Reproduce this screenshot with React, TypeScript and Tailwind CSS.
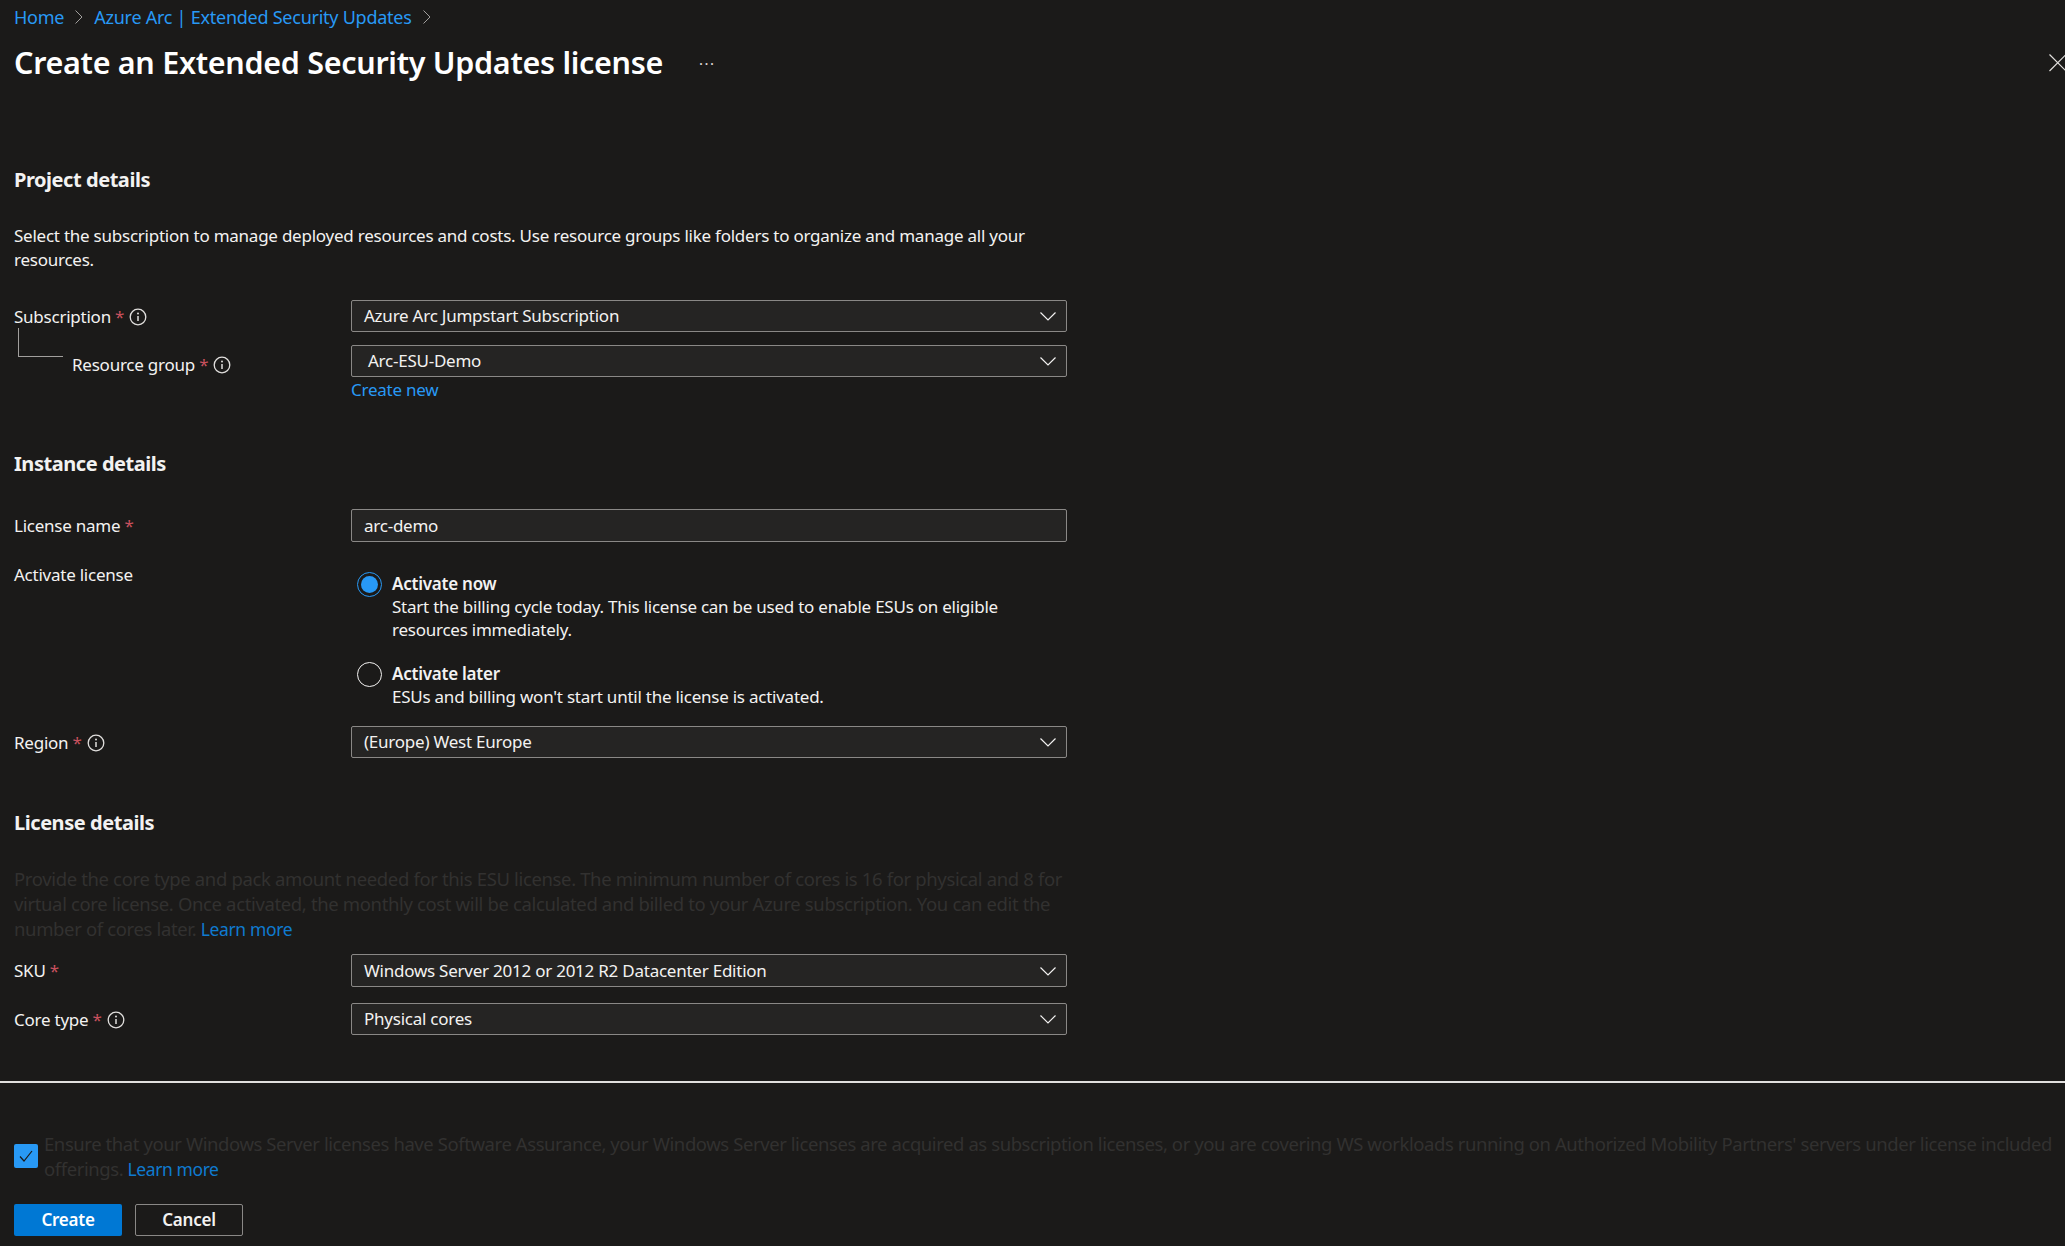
import { type ReactNode } from 'react'

const LINK = 'text-[#2899f5]'
const LEARN = 'text-[#0f7bd0] text-[17.5px]'
const DIM = 'text-[#323130]'

function Chevron() {
  return (
    <svg width="16" height="16" viewBox="0 0 16 16" fill="none" stroke="#f3f2f1" strokeWidth="1.2" className="shrink-0">
      <path d="M0.5 4.5 L8 12 L15.5 4.5" />
    </svg>
  )
}

function Info() {
  return (
    <svg width="18" height="18" viewBox="0 0 18 18" fill="none" className="shrink-0">
      <circle cx="9" cy="9" r="7.8" stroke="#e1dfdd" strokeWidth="1.3" />
      <circle cx="9" cy="5.4" r="1" fill="#e1dfdd" />
      <path d="M9 8 V13" stroke="#e1dfdd" strokeWidth="1.5" />
    </svg>
  )
}

function Req() {
  return <span className="text-[#c8515e]">*</span>
}

function Select({ value, pad = 'pl-[12px]', input }: { value: string; pad?: string; input?: boolean }) {
  return (
    <div className={`flex h-full w-[716px] items-center justify-between rounded-[2px] border border-[#8a8886] bg-[#252423] pr-[10px] ${pad}`}>
      <span className="text-[#f3f2f1]">{value}</span>
      {!input && <Chevron />}
    </div>
  )
}

function Row({ label, children, h, mt, labelPad = '' }: { label: ReactNode; children: ReactNode; h: string; mt: string; labelPad?: string }) {
  return (
    <div className={`flex ${h} ${mt}`}>
      <div className={`flex w-[337px] shrink-0 items-center gap-[5px] text-[#f3f2f1] ${labelPad}`}>{label}</div>
      {children}
    </div>
  )
}

function Heading({ children, mt }: { children: ReactNode; mt: string }) {
  return <h2 className={`flex h-[30px] items-center text-[20px] font-bold tracking-[-0.45px] text-[#f3f2f1] ${mt}`}>{children}</h2>
}

function Radio({ on, title, lines, mt }: { on?: boolean; title: string; lines: string[]; mt: string }) {
  return (
    <div className={`flex ${mt}`}>
      <div className={`ml-[6px] flex h-[25px] w-[25px] shrink-0 items-center justify-center rounded-full border ${on ? 'border-[#2899f5]' : 'border-[#f3f2f1]'}`}>
        {on && <div className="h-[17px] w-[17px] rounded-full bg-[#2899f5]" />}
      </div>
      <div className="ml-[10px] text-[#f3f2f1] leading-[23px]">
        <div className="font-semibold">{title}</div>
        {lines.map(l => <div key={l}>{l}</div>)}
      </div>
    </div>
  )
}

export default function App() {
  return (
    <div className="h-[1246px] w-[2065px] overflow-hidden bg-[#1b1a19] font-['Noto_Sans',sans-serif] text-[17px] tracking-[-0.24px]">
      <div className="relative pl-[14px]">
        <div className={`flex h-[34px] items-center gap-[10px] text-[18px] tracking-[-0.25px] ${LINK}`}>
          <span>Home</span>
          <svg width="10" height="16" viewBox="0 0 10 16" fill="none" stroke="#a19f9d" strokeWidth="1"><path d="M1.5 1.5 L8 8 L1.5 14.5" /></svg>
          <span>Azure Arc | Extended Security Updates</span>
          <svg width="10" height="16" viewBox="0 0 10 16" fill="none" stroke="#a19f9d" strokeWidth="1"><path d="M1.5 1.5 L8 8 L1.5 14.5" /></svg>
        </div>
        <div className="mt-[9px] flex h-[40px] items-center">
          <h1 className="text-[30.5px] font-semibold tracking-[-0.3px] text-white">Create an Extended Security Updates license</h1>
          <span className="ml-[36px] text-[15px] tracking-[1.5px] text-[#e1dfdd]">···</span>
        </div>
        <svg width="18" height="18" viewBox="0 0 18 18" fill="none" stroke="#e1dfdd" strokeWidth="1.2" className="absolute top-[54px] left-[2049px]">
          <path d="M0.5 0.5 L17 17 M17 0.5 L0.5 17" />
        </svg>

        <Heading mt="mt-[82px]">Project details</Heading>
        <p className="mt-[29px] w-[1040px] leading-[23.5px] text-[#f3f2f1]">
          Select the subscription to manage deployed resources and costs. Use resource groups like folders to organize and manage all your resources.
        </p>

        <div className="relative">
          <div className="absolute top-[28px] left-[4px] h-[29px] w-[45px] border-b border-l border-[#a19f9d]" />
          <Row h="h-[32px]" mt="mt-[29px]" labelPad="pt-[2px]" label={<><span>Subscription <Req /></span><Info /></>}>
            <Select value="Azure Arc Jumpstart Subscription" />
          </Row>
          <Row h="h-[32px]" mt="mt-[13px]" labelPad="pl-[58px] pt-[8px]" label={<><span>Resource group <Req /></span><Info /></>}>
            <Select value="Arc-ESU-Demo" pad="pl-[16px]" />
          </Row>
        </div>
        <div className={`ml-[337px] mt-[1px] flex h-[24px] items-center ${LINK}`}>Create new</div>

        <Heading mt="mt-[47px]">Instance details</Heading>
        <Row h="h-[33px]" mt="mt-[30px]" label={<span>License name <Req /></span>}>
          <Select value="arc-demo" input />
        </Row>
        <div className="mt-[21px] flex">
          <div className="w-[337px] shrink-0 leading-[23px] text-[#f3f2f1]">Activate license</div>
          <div className="pt-[9px]">
            <Radio on mt="" title="Activate now" lines={['Start the billing cycle today. This license can be used to enable ESUs on eligible', 'resources immediately.']} />
            <Radio mt="mt-[21px]" title="Activate later" lines={["ESUs and billing won't start until the license is activated."]} />
          </div>
        </div>
        <Row h="h-[32px]" mt="mt-[18px]" labelPad="pt-[2px]" label={<><span>Region <Req /></span><Info /></>}>
          <Select value="(Europe) West Europe" />
        </Row>

        <Heading mt="mt-[50px]">License details</Heading>
        <p className={`mt-[28px] w-[1060px] text-[18.5px] leading-[25px] tracking-[-0.36px] ${DIM}`}>
          Provide the core type and pack amount needed for this ESU license. The minimum number of cores is 16 for physical and 8 for virtual core license. Once activated, the monthly cost will be calculated and billed to your Azure subscription. You can edit the number of cores later. <span className={LEARN}>Learn more</span>
        </p>
        <Row h="h-[33px]" mt="mt-[12px]" label={<span>SKU <Req /></span>}>
          <Select value="Windows Server 2012 or 2012 R2 Datacenter Edition" />
        </Row>
        <Row h="h-[32px]" mt="mt-[16px]" labelPad="pt-[2px]" label={<><span>Core type <Req /></span><Info /></>}>
          <Select value="Physical cores" />
        </Row>
      </div>

      <div className="mt-[46px] h-[2px] w-full bg-[#e1dfdd]" />

      <div className="pl-[14px]">
        <div className="mt-[48px] flex">
          <div className="mt-[13px] flex h-[24px] w-[24px] shrink-0 items-center justify-center rounded-[2px] bg-[#2899f5]">
            <svg width="16" height="16" viewBox="0 0 16 16" fill="none" stroke="#1b1a19" strokeWidth="1.2"><path d="M2 8.5 L6 13 L14 3" /></svg>
          </div>
          <p className={`ml-[6px] w-[2020px] text-[18.5px] leading-[25px] tracking-[-0.42px] ${DIM}`}>
            Ensure that your Windows Server licenses have Software Assurance, your Windows Server licenses are acquired as subscription licenses, or you are covering WS workloads running on Authorized Mobility Partners' servers under license included offerings. <span className={LEARN}>Learn more</span>
          </p>
        </div>
        <div className="mt-[22px] flex gap-[13px]">
          <button className="h-[32px] w-[108px] rounded-[2px] bg-[#0078d4] font-semibold text-white">Create</button>
          <button className="h-[32px] w-[108px] rounded-[2px] border border-[#8a8886] font-semibold text-[#f3f2f1]">Cancel</button>
        </div>
      </div>
    </div>
  )
}
